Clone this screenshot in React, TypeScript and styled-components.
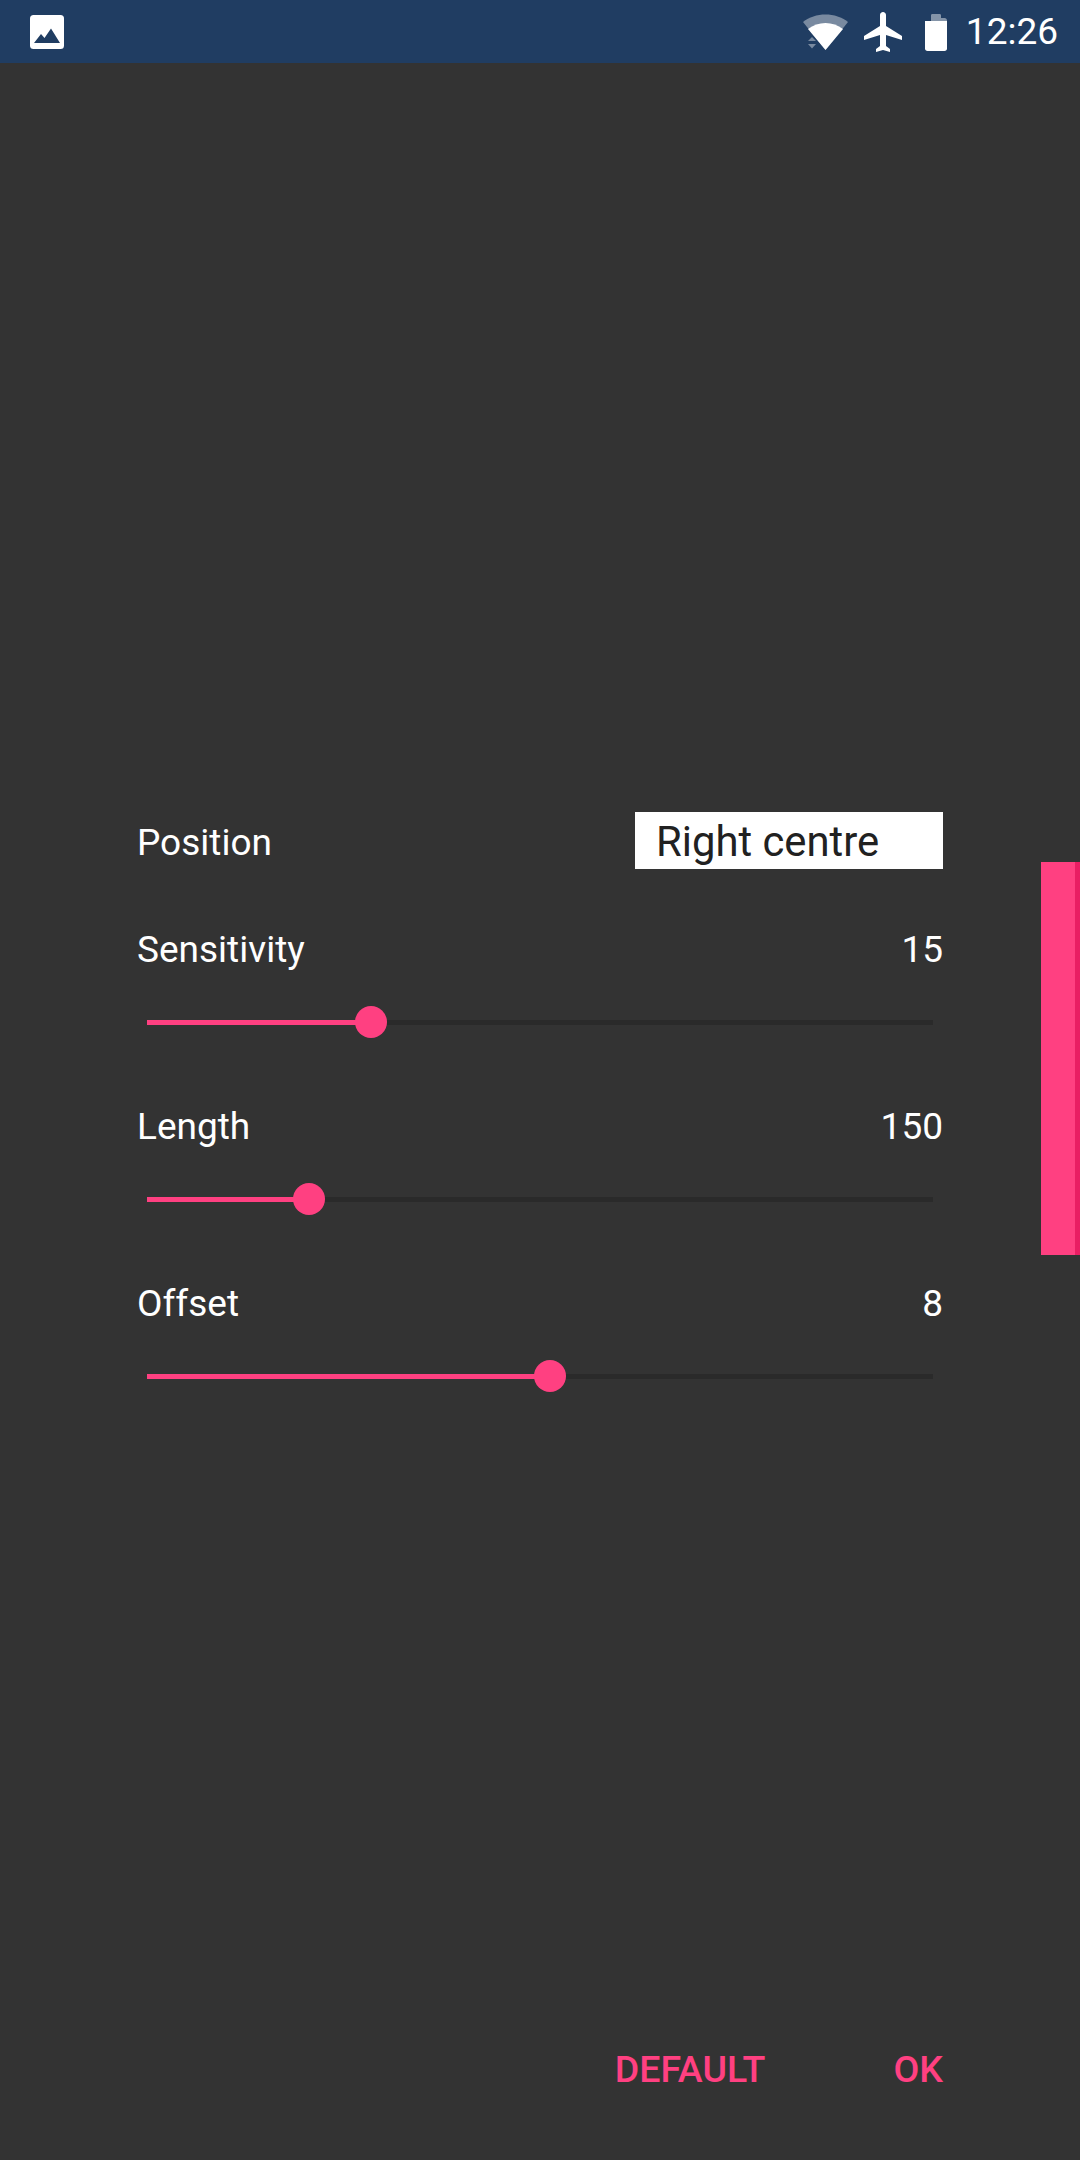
import React from "react";
import styled, { createGlobalStyle } from "styled-components";

const GlobalStyle = createGlobalStyle`
  html, body {
    margin: 0;
    padding: 0;
    background: #333333;
  }
`;

const Screen = styled.div`
  position: relative;
  width: 1080px;
  height: 2160px;
  display: flex;
  flex-direction: column;
  background: #333333;
  color: #ffffff;
  font-family: Roboto, "Liberation Sans", sans-serif;
  overflow: hidden;
`;

const StatusBar = styled.div`
  height: 63px;
  flex: none;
  display: flex;
  align-items: center;
  padding: 0 22px 0 30px;
  background: #203d62;
`;

const StatusIcons = styled.div`
  margin-left: auto;
  display: flex;
  align-items: center;
`;

const Clock = styled.span`
  margin-left: 19px;
  font-size: 37px;
  line-height: 63px;
  font-weight: 400;
`;

const StatusIcon = styled.svg<{ $gap?: number }>`
  display: block;
  flex: none;
  margin-left: ${(p) => p.$gap ?? 0}px;
`;

const Panel = styled.div`
  flex: 1;
  display: flex;
  flex-direction: column;
  padding: 749px 137px 70px 137px;
`;

const PositionRow = styled.div`
  display: flex;
  align-items: center;
  justify-content: space-between;
  height: 57px;
  margin-bottom: 49px;
`;

const Label = styled.span`
  padding-top: 3px;
  font-size: 37px;
  line-height: 57px;
`;

const Select = styled.div`
  box-sizing: border-box;
  width: 308px;
  height: 57px;
  padding-left: 21px;
  background: #ffffff;
  color: #212121;
  font-size: 41.8px;
  line-height: 59px;
`;

const SliderBlock = styled.div`
  height: 177px;
`;

const SliderHead = styled.div`
  display: flex;
  justify-content: space-between;
  height: 57px;
`;

const Track = styled.div`
  position: relative;
  height: 5px;
  margin: 45px 10px 0;
  background: #2a2a2a;
`;

const TrackFill = styled.div`
  height: 100%;
  background: #ff4081;
`;

const Thumb = styled.div`
  position: absolute;
  top: 50%;
  width: 32px;
  height: 32px;
  margin-top: -1px;
  border-radius: 50%;
  background: #ff4081;
  transform: translate(-50%, -50%);
`;

const Actions = styled.div`
  margin-top: auto;
  display: flex;
  justify-content: flex-end;
  gap: 128px;
`;

const ActionButton = styled.button`
  padding: 0;
  border: 0;
  background: none;
  color: #ff4081;
  font-family: inherit;
  font-size: 37.5px;
  line-height: 42px;
  font-weight: 500;
`;

const EdgeHandle = styled.div`
  position: absolute;
  top: 862px;
  right: 0;
  box-sizing: border-box;
  width: 39px;
  height: 393px;
  background: #ff4081;
  border-right: 5px solid #e91e63;
`;

const sliders = [
  { label: "Sensitivity", value: 15, percent: 28.5 },
  { label: "Length", value: 150, percent: 20.6 },
  { label: "Offset", value: 8, percent: 51.3 },
];

const App: React.FC = () => {
  return (
    <Screen>
      <GlobalStyle />
      <StatusBar>
        <StatusIcon width="34" height="34" viewBox="0 0 34 34">
          <rect width="34" height="34" rx="3.5" fill="#ffffff" />
          <path d="M4 28 L11 19 L14.5 23 L21 13.5 L30 28 Z" fill="#203d62" />
        </StatusIcon>
        <StatusIcons>
          <StatusIcon width="46" height="38" viewBox="0 0 46 38">
            <path d="M0 9 C12 -1 33 -1 45 9 L22.5 37 Z" fill="#ffffff" fillOpacity="0.4" />
            <path d="M5 16 C15 8 30 8 40 16 L22.5 37 Z" fill="#ffffff" />
            <path d="M5 28 L9 24 L13 28 Z" fill="#ffffff" fillOpacity="0.4" />
            <path d="M5 31 L13 31 L9 35.500 Z" fill="#ffffff" fillOpacity="0.4" />
          </StatusIcon>
          <StatusIcon $gap={11} width="48" height="48" viewBox="0 0 24 24">
            <path
              d="M21 16v-2l-8-5V3.5c0-.83-.67-1.5-1.5-1.5S10 2.67 10 3.5V9l-8 5v2l8-2.5V19l-2 1.500V22l3.500-1 3.500 1v-1.500L13 19v-5.500l8 2.500z"
              fill="#ffffff"
            />
          </StatusIcon>
          <StatusIcon $gap={17} width="22" height="38" viewBox="0 0 22 38">
            <path d="M6 8V2.500C6 1.500 6.500 1 7.500 1h7c1 0 1.500.5 1.500 1.500V5h3.500C21 5 22 6 22 7.500V8z" fill="#ffffff" fillOpacity="0.45" />
            <path d="M0 8h22v27.500c0 1.500-1 2.500-2.500 2.500h-17C1 38 0 37 0 35.500z" fill="#ffffff" />
          </StatusIcon>
          <Clock>12:26</Clock>
        </StatusIcons>
      </StatusBar>
      <Panel>
        <PositionRow>
          <Label>Position</Label>
          <Select>Right centre</Select>
        </PositionRow>
        {sliders.map((s) => (
          <SliderBlock key={s.label}>
            <SliderHead>
              <Label>{s.label}</Label>
              <Label>{s.value}</Label>
            </SliderHead>
            <Track>
              <TrackFill style={{ width: `${s.percent}%` }} />
              <Thumb style={{ left: `${s.percent}%` }} />
            </Track>
          </SliderBlock>
        ))}
        <Actions>
          <ActionButton>DEFAULT</ActionButton>
          <ActionButton>OK</ActionButton>
        </Actions>
      </Panel>
      <EdgeHandle />
    </Screen>
  );
};

export default App;
